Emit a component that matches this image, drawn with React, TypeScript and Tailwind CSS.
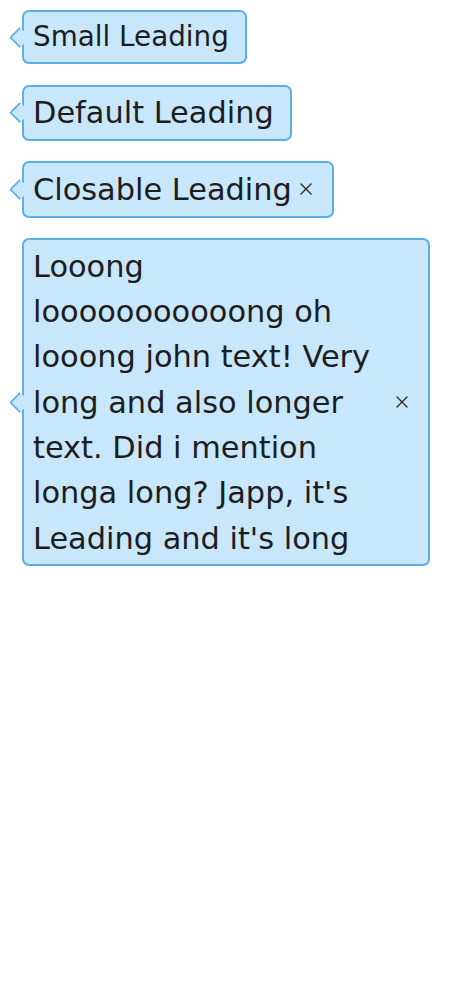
import React from 'react';

type BubbleProps = {
  text: string;
  size?: 'small' | 'default';
  closable?: boolean;
};

// little "x" used on the closable bubbles
const CloseIcon = () => (
  <svg width="12" height="12" viewBox="0 0 12 12" className="block">
    <path d="M1 1 L11 11 M11 1 L1 11" stroke="#2a2a2a" strokeWidth="1.4" strokeLinecap="round" />
  </svg>
);

const Bubble = ({ text, size = 'default', closable = false }: BubbleProps) => {
  const textClass =
    size === 'small' ? 'text-[27.8px] leading-[42px] py-[4px]' : 'text-[30.4px] leading-[45.33px] py-[3.5px]';

  return (
    <div className="relative self-start max-w-[408px]">
      {/* pointer on the leading edge */}
      <div className="absolute left-[-10px] top-1/2 -mt-[7.5px] w-[15px] h-[15px] rotate-45 rounded-bl-[3px] border-l-2 border-b-2 border-[#5aafe8] bg-[#c8e7fa] z-10" />
      <div
        className={`flex items-center rounded-[7px] border-2 border-[#5aafe8] bg-[#c8e7fa] pl-[9px] pr-[16px] text-[#1d1d1f] ${textClass}`}
        style={{ fontFamily: '"DejaVu Sans", Verdana, sans-serif' }}
      >
        <span className="relative z-20 flex-1">{text}</span>
        {closable && (
          <button className="ml-[8px] mr-[4px] flex-shrink-0 flex items-center justify-center">
            <CloseIcon />
          </button>
        )}
      </div>
    </div>
  );
};

export default function App() {
  return (
    <div className="min-h-[1000px] w-full bg-white pl-[22px] pt-[10px] flex flex-col gap-[20.5px]">
      <Bubble text="Small Leading" size="small" />
      <Bubble text="Default Leading" />
      <Bubble text="Closable Leading" closable />
      <Bubble
        text="Looong looooooooooong oh looong john text! Very long and also longer text. Did i mention longa long? Japp, it's Leading and it's long"
        closable
      />
    </div>
  );
}
